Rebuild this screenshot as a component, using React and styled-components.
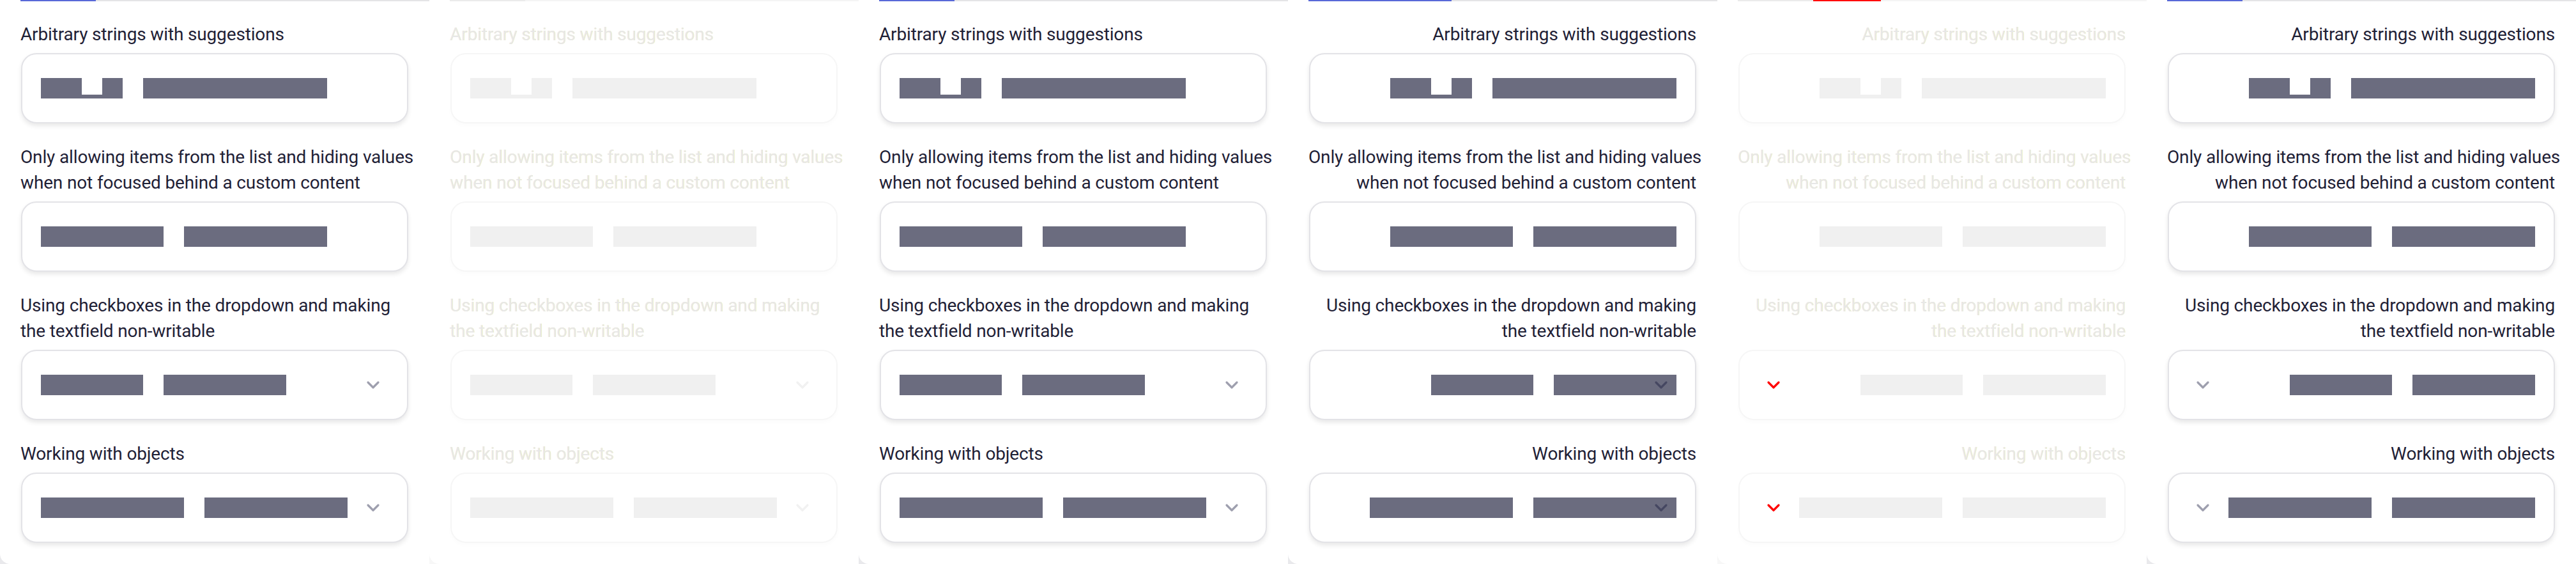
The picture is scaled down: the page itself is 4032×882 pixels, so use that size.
import React from "react";
import styled, { createGlobalStyle, css } from "styled-components";

const GlobalStyle = createGlobalStyle`
  html, body {
    margin: 0;
    padding: 0;
    background: #ffffff;
  }
  body {
    font-family: Roboto, "Liberation Sans", Arial, sans-serif;
    overflow: hidden;
  }
`;

const BLUE = "#5869d8";

const Strip = styled.div`
  display: flex;
  width: 100%;
`;

const PanelFrame = styled.div`
  flex: 0 0 672px;
  width: 672px;
  height: 882px;
  overflow: hidden;
  background: ${(p) => (p.$diff ? "#f7f7f7" : "#e9e9ec")};
`;

const Card = styled.div`
  height: 882px;
  background: #ffffff;
  border-bottom-left-radius: 16px;
  display: flex;
  flex-direction: column;
`;

const TabLine = styled.div`
  display: flex;
  height: 2px;
  margin-left: 32px;
  background: ${(p) => (p.$diff ? "#f4f4f4" : "#e4e4e6")};
`;

const TabSegment = styled.div`
  height: 2px;
  flex: 0 0 auto;
`;

const Content = styled.div`
  display: flex;
  flex-direction: column;
  gap: 33px;
  padding: 32px 33px 0 32px;
`;

const Group = styled.div`
  display: flex;
  flex-direction: column;
  gap: 9px;
`;

const Label = styled.div`
  font-size: 28px;
  line-height: 40px;
  font-weight: 400;
  letter-spacing: -0.15px;
  text-align: ${(p) => (p.$rtl ? "right" : "left")};
  color: #1f2136;
  ${(p) =>
    p.$diff &&
    css`
      color: #e7e7e7;
      text-shadow: 0.6px 0 0 rgba(255, 240, 0, 0.28);
    `}
`;

const LabelLine = styled.span`
  display: block;
  white-space: nowrap;
`;

const Field = styled.div`
  position: relative;
  box-sizing: border-box;
  width: 606px;
  height: 110px;
  margin-left: 1px;
  border: 2px solid ${(p) => (p.$diff ? "#f6f6f6" : "#e3e3e7")};
  border-radius: 24px;
  background: #ffffff;
  box-shadow: ${(p) =>
    p.$diff ? "0 4px 7px rgba(0,0,0,0.015)" : "0 4px 7px rgba(0,0,0,0.09)"};
  display: flex;
  align-items: center;
  justify-content: ${(p) => (p.$rtl ? "flex-end" : "flex-start")};
  gap: 32px;
  padding: 0 29px;
`;

const Bar = styled.div`
  height: 32px;
  flex: 0 0 auto;
  background: ${(p) => (p.$diff ? "#f0f0f0" : "#6b6c7f")};
`;

const NotchBar = styled.div`
  display: flex;
  height: 32px;
  flex: 0 0 auto;
`;

const NotchGap = styled.div`
  width: 32px;
  display: flex;
  flex-direction: column;
  justify-content: flex-end;
`;

const NotchFoot = styled.div`
  height: 6px;
  background: ${(p) => (p.$diff ? "#f0f0f0" : "#6b6c7f")};
`;

const ChevronWrap = styled.span`
  position: absolute;
  top: 50%;
  transform: translateY(-50%);
  ${(p) => (p.$side === "left" ? "left: 42px;" : "right: 42px;")}
  display: flex;
  line-height: 0;
`;

function Chevron({ side, color }) {
  return (
    <ChevronWrap $side={side}>
      <svg width="22" height="14" viewBox="0 0 22 14" fill="none">
        <path
          d="M3 3 L11 11 L19 3"
          stroke={color}
          strokeWidth="3.2"
          strokeLinecap="round"
          strokeLinejoin="round"
        />
      </svg>
    </ChevronWrap>
  );
}

const fields = [
  {
    lines: ["Arbitrary strings with suggestions"],
    bars: [{ w: 128, notch: true }, { w: 288 }],
    chevron: false,
  },
  {
    lines: [
      "Only allowing items from the list and hiding values",
      "when not focused behind a custom content",
    ],
    bars: [{ w: 192 }, { w: 224 }],
    chevron: false,
  },
  {
    lines: [
      "Using checkboxes in the dropdown and making",
      "the textfield non-writable",
    ],
    bars: [{ w: 160 }, { w: 192 }],
    chevron: true,
  },
  {
    lines: ["Working with objects"],
    bars: [{ w: 224 }, { w: 224 }],
    chevron: true,
  },
];

const CHEV_NORMAL = "rgba(24, 26, 62, 0.42)";

const panels = [
  {
    rtl: false,
    diff: false,
    tabs: [{ w: 118, c: BLUE }],
    chevron: { side: "right", color: CHEV_NORMAL },
  },
  {
    rtl: false,
    diff: true,
    tabs: [{ w: 118, c: "#ebebeb" }],
    chevron: { side: "right", color: "#f1f1f1" },
  },
  {
    rtl: false,
    diff: false,
    tabs: [{ w: 118, c: BLUE }],
    chevron: { side: "right", color: CHEV_NORMAL },
  },
  {
    rtl: true,
    diff: false,
    tabs: [{ w: 224, c: BLUE }],
    chevron: { side: "right", color: "rgba(24, 26, 62, 0.45)" },
  },
  {
    rtl: true,
    diff: true,
    tabs: [
      { w: 118, c: "#ebebeb" },
      { w: 106, c: "#ff0000" },
    ],
    chevron: { side: "left", color: "#ff0000" },
  },
  {
    rtl: true,
    diff: false,
    tabs: [{ w: 118, c: BLUE }],
    chevron: { side: "left", color: CHEV_NORMAL },
  },
];

function BarShape({ bar, diff }) {
  if (bar.notch) {
    return (
      <NotchBar>
        <Bar $diff={diff} style={{ width: 64 }} />
        <NotchGap>
          <NotchFoot $diff={diff} />
        </NotchGap>
        <Bar $diff={diff} style={{ width: bar.w - 96 }} />
      </NotchBar>
    );
  }
  return <Bar $diff={diff} style={{ width: bar.w }} />;
}

function Panel({ panel }) {
  const { rtl, diff, tabs, chevron } = panel;
  return (
    <PanelFrame $diff={diff}>
      <Card>
        <TabLine $diff={diff}>
          {tabs.map((t, i) => (
            <TabSegment key={i} style={{ width: t.w, background: t.c }} />
          ))}
        </TabLine>
        <Content>
          {fields.map((f, i) => (
            <Group key={i}>
              <Label $rtl={rtl} $diff={diff}>
                {f.lines.map((l, j) => (
                  <LabelLine key={j}>{l}</LabelLine>
                ))}
              </Label>
              <Field $rtl={rtl} $diff={diff}>
                {f.bars.map((b, k) => (
                  <BarShape key={k} bar={b} diff={diff} />
                ))}
                {f.chevron && (
                  <Chevron side={chevron.side} color={chevron.color} />
                )}
              </Field>
            </Group>
          ))}
        </Content>
      </Card>
    </PanelFrame>
  );
}

export default function App() {
  return (
    <>
      <GlobalStyle />
      <Strip>
        {panels.map((p, i) => (
          <Panel key={i} panel={p} />
        ))}
      </Strip>
    </>
  );
}
